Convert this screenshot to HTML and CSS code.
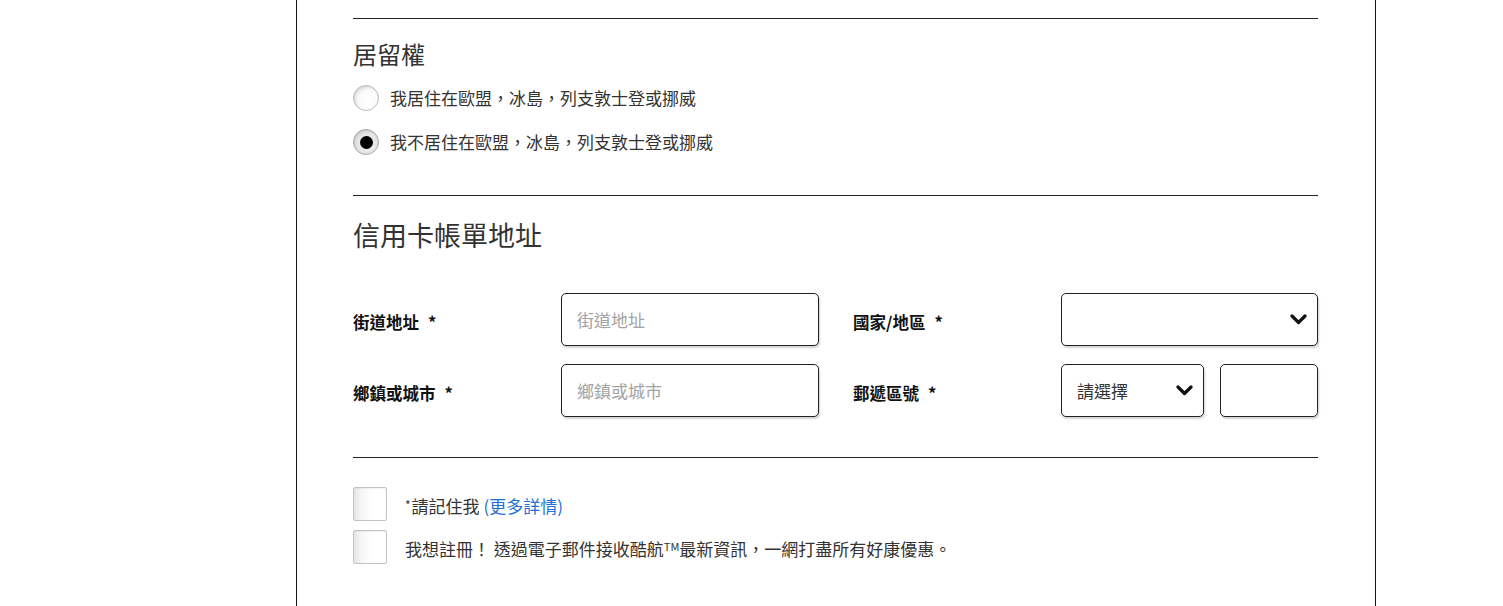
FILE: index.html
```html
<!DOCTYPE html>
<html lang="zh-Hant">
<head>
<meta charset="utf-8">
<title>居留權</title>
<link rel="stylesheet" href="styles.css">
</head>
<body>
<div class="page">
  <div class="panel">
    <hr class="rule">
    <section class="residency">
      <h2 class="title-sm">居留權</h2>
      <div class="radios">
        <label class="radio-row"><span class="radio"></span><span class="radio-text">我居住在歐盟，冰島，列支敦士登或挪威</span></label>
        <label class="radio-row"><span class="radio checked"><span class="dot"></span></span><span class="radio-text">我不居住在歐盟，冰島，列支敦士登或挪威</span></label>
      </div>
    </section>
    <hr class="rule">
    <section class="billing">
      <h2 class="title-lg">信用卡帳單地址</h2>
      <div class="addr-grid">
        <div class="label">街道地址<span class="req">*</span></div>
        <div class="field"><span class="placeholder">街道地址</span></div>
        <div class="label label-right">國家/地區<span class="req">*</span></div>
        <div class="field select">
          <span class="value"></span>
          <svg class="chev" width="17" height="11" viewBox="0 0 17 11"><path d="M2 2 L8.5 8.5 L15 2" fill="none" stroke="#111" stroke-width="3.2" stroke-linecap="round" stroke-linejoin="round"/></svg>
        </div>
        <div class="label">鄉鎮或城市<span class="req">*</span></div>
        <div class="field"><span class="placeholder">鄉鎮或城市</span></div>
        <div class="label label-right">郵遞區號<span class="req">*</span></div>
        <div class="postal">
          <div class="field select small">
            <span class="value">請選擇</span>
            <svg class="chev" width="17" height="11" viewBox="0 0 17 11"><path d="M2 2 L8.5 8.5 L15 2" fill="none" stroke="#111" stroke-width="3.2" stroke-linecap="round" stroke-linejoin="round"/></svg>
          </div>
          <div class="field zip"></div>
        </div>
      </div>
    </section>
    <hr class="rule">
    <section class="checks">
      <label class="check-row"><span class="checkbox"></span><span class="check-text"><span class="star">*</span>請記住我 <a class="link" href="#">(更多詳情)</a></span></label>
      <label class="check-row"><span class="checkbox"></span><span class="check-text">我想註冊！ 透過電子郵件接收酷航<span class="tm">TM</span>最新資訊，一網打盡所有好康優惠。</span></label>
    </section>
  </div>
</div>
</body>
</html>
```
FILE: styles.css
```css
html, body {
  margin: 0;
  padding: 0;
  background: #fff;
}
body {
  font-family: "Noto Sans CJK TC", "Noto Sans", sans-serif;
  color: #222;
  height: 606px;
  overflow: hidden;
}
.page {
  display: flex;
  justify-content: flex-start;
  padding-left: 296px;
}
.panel {
  width: 965px;
  min-height: 606px;
  border-left: 1px solid #111;
  border-right: 1px solid #111;
  padding: 18px 57px 0 56px;
}
.rule {
  margin: 0;
  border: none;
  border-top: 1px solid #222;
  height: 0;
}
.title-sm {
  margin: 20px 0 0 0;
  font-size: 24px;
  line-height: 30px;
  font-weight: 400;
  color: #333;
}
.radios {
  display: flex;
  flex-direction: column;
  gap: 18px;
  margin-top: 16px;
  margin-bottom: 40px;
}
.radio-row {
  display: flex;
  align-items: center;
  gap: 11px;
  height: 26px;
}
.radio {
  width: 24px;
  height: 24px;
  border-radius: 50%;
  border: 1px solid #bcbcbc;
  background: radial-gradient(circle at 60% 60%, #ffffff 0%, #fbfbfb 45%, #e2e2e2 80%, #cfcfcf 100%);
  box-shadow: inset 1px 1px 2px rgba(0,0,0,0.08);
  display: flex;
  align-items: center;
  justify-content: center;
  flex: none;
}
.radio.checked {
  background: radial-gradient(circle at 55% 55%, #f4f4f4 0%, #e6e6e6 50%, #c8c8c8 100%);
  border-color: #a8a8a8;
}
.dot {
  width: 13px;
  height: 13px;
  border-radius: 50%;
  background: #000;
}
.radio-text {
  font-size: 17px;
  color: #333;
  line-height: 26px;
}
.title-lg {
  margin: 22px 0 0 0;
  font-size: 27px;
  line-height: 34px;
  font-weight: 400;
  color: #333;
}
.addr-grid {
  display: grid;
  grid-template-columns: 208px 258px 242px 257px;
  grid-auto-rows: 53px;
  row-gap: 18px;
  margin-top: 41px;
  margin-bottom: 40px;
}
.label {
  display: flex;
  align-items: center;
  font-size: 16.5px;
  font-weight: 700;
  color: #111;
  padding-top: 4px;
}
.req {
  margin-left: 9px;
}
.label-right {
  padding-left: 34px;
}
.field {
  box-sizing: border-box;
  height: 53px;
  border: 1px solid #222;
  border-radius: 5px;
  box-shadow: 1px 2px 2px rgba(0,0,0,0.18);
  display: flex;
  align-items: center;
  padding: 0 15px;
  background: #fff;
}
.placeholder {
  font-size: 17px;
  color: #a3a3a3;
}
.select {
  justify-content: space-between;
  padding: 0 10px 0 15px;
}
.value {
  font-size: 17px;
  color: #333;
}
.chev {
  display: block;
  flex: none;
}
.postal {
  display: flex;
  gap: 16px;
}
.small {
  width: 143px;
}
.zip {
  width: 98px;
}
.checks {
  display: flex;
  flex-direction: column;
  gap: 9px;
  margin-top: 29px;
}
.check-row {
  display: flex;
  align-items: center;
  gap: 18px;
  height: 34px;
}
.checkbox {
  box-sizing: border-box;
  width: 34px;
  height: 34px;
  border: 1px solid #c4c4c4;
  border-radius: 2px;
  background: linear-gradient(to right, #e4e4e4 0%, #f7f7f7 25%, #ffffff 60%);
  box-shadow: inset 0 1px 1px rgba(0,0,0,0.05);
  flex: none;
}
.check-text {
  font-size: 17px;
  color: #333;
  padding-top: 2px;
}
.star {
  font-size: 12px;
  vertical-align: 3px;
  margin-right: 1px;
}
.link {
  color: #1f6fd6;
  text-decoration: none;
}
.tm {
  font-size: 11px;
  vertical-align: 5px;
}
```
